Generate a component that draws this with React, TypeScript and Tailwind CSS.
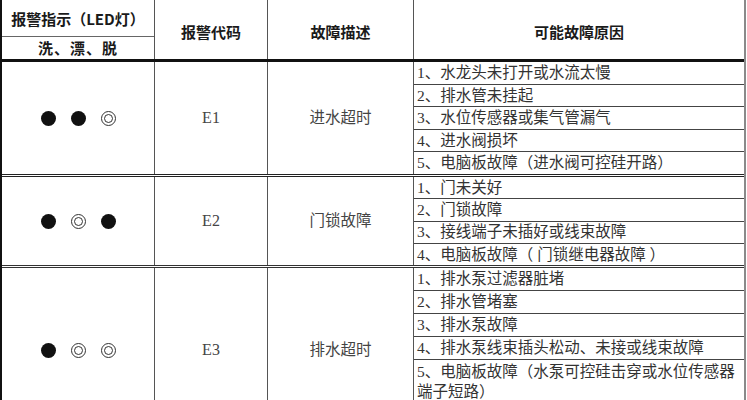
import React from "react";

const body = { fontFamily: '"Liberation Serif", "Noto Sans CJK SC", serif' };
const head = { fontFamily: '"Noto Sans CJK SC", "Noto Sans", sans-serif' };

function Dot({ on }: { on: boolean }) {
  if (on) return <div className="w-[15px] h-[15px] rounded-full bg-[#111]" />;
  return (
    <div className="w-[15px] h-[15px] rounded-full border border-[#333] flex items-center justify-center">
      <div className="w-[9px] h-[9px] rounded-full border border-[#333]" />
    </div>
  );
}

type Group = {
  leds: boolean[];
  code: string;
  desc: string;
  items: React.ReactNode[];
  heights?: string[];
  wrap: string;
};

const groups: Group[] = [
  {
    leds: [true, true, false],
    code: "E1",
    desc: "进水超时",
    items: [
      "1、水龙头未打开或水流太慢",
      "2、排水管未挂起",
      "3、水位传感器或集气管漏气",
      "4、进水阀损坏",
      "5、电脑板故障（进水阀可控硅开路）",
    ],
    wrap: "h-[115px] border-b-[3px] border-double border-[#222]",
  },
  {
    leds: [true, false, true],
    code: "E2",
    desc: "门锁故障",
    items: [
      "1、门未关好",
      "2、门锁故障",
      "3、接线端子未插好或线束故障",
      "4、电脑板故障（ 门锁继电器故障 ）",
    ],
    wrap: "h-[91px] border-b-[3px] border-double border-[#333]",
  },
  {
    leds: [true, false, false],
    code: "E3",
    desc: "排水超时",
    items: [
      "1、排水泵过滤器脏堵",
      "2、排水管堵塞",
      "3、排水泵故障",
      "4、排水泵线束插头松动、未接或线束故障",
      <>
        5、电脑板故障（水泵可控硅击穿或水位传感器
        <br />
        端子短路）
      </>,
    ],
    heights: ["h-[23px]", "h-[23px]", "h-[23px]", "h-[23px]", "h-[72px]"],
    wrap: "h-[164px]",
  },
];

export default function App() {
  return (
    <div className="w-[747px] h-[400px] overflow-hidden bg-white">
      <div className="w-[746px] border-l-2 border-l-[#111] border-r-2 border-r-[#8a8a8a]">
        {/* Header */}
        <div className="flex h-[62px] border-b-[3px] border-[#111] text-[15px] font-bold text-[#1a1a1a]" style={head}>
          <div className="w-[153px] shrink-0 border-r border-[#555] flex flex-col">
            <div className="h-[37px] border-b border-[#666] flex items-center justify-center pt-[2px]">
              报警指示（LED灯）
            </div>
            <div className="flex-1 flex items-center justify-center tracking-[1px]">洗、漂、脱</div>
          </div>
          <div className="w-[113px] shrink-0 border-r border-[#555] flex items-center justify-center pt-[5px]">
            报警代码
          </div>
          <div className="w-[146px] shrink-0 border-r border-[#555] flex items-center justify-center pt-[5px]">
            故障描述
          </div>
          <div className="flex-1 flex items-center justify-center pt-[5px]">可能故障原因</div>
        </div>

        {groups.map((g, gi) => (
          <div key={gi} className={`flex ${g.wrap}`}>
            <div className="w-[153px] shrink-0 border-r border-[#555] flex items-center justify-center gap-[15px]">
              {g.leds.map((on, i) => (
                <Dot key={i} on={on} />
              ))}
            </div>
            <div
              className="w-[113px] shrink-0 border-r border-[#555] flex items-center justify-center text-[16px] text-[#444]"
              style={body}
            >
              {g.code}
            </div>
            <div
              className="w-[146px] shrink-0 border-r border-[#555] flex items-center justify-center text-[15.5px] text-[#444]"
              style={body}
            >
              {g.desc}
            </div>
            <div className="flex-1 flex flex-col text-[15.5px] text-[#333]" style={body}>
              {g.items.map((it, i) => {
                const last = i === g.items.length - 1;
                const h = g.heights ? g.heights[i] : "flex-1";
                const multi = g.heights && last;
                return (
                  <div
                    key={i}
                    className={`${h} shrink-0 pl-[3px] ${last ? "" : "border-b border-[#444]"} ${
                      multi ? "leading-[20px] pt-[2px]" : "flex items-center leading-none"
                    } whitespace-pre`}
                  >
                    <span>{it}</span>
                  </div>
                );
              })}
            </div>
          </div>
        ))}
      </div>
    </div>
  );
}
